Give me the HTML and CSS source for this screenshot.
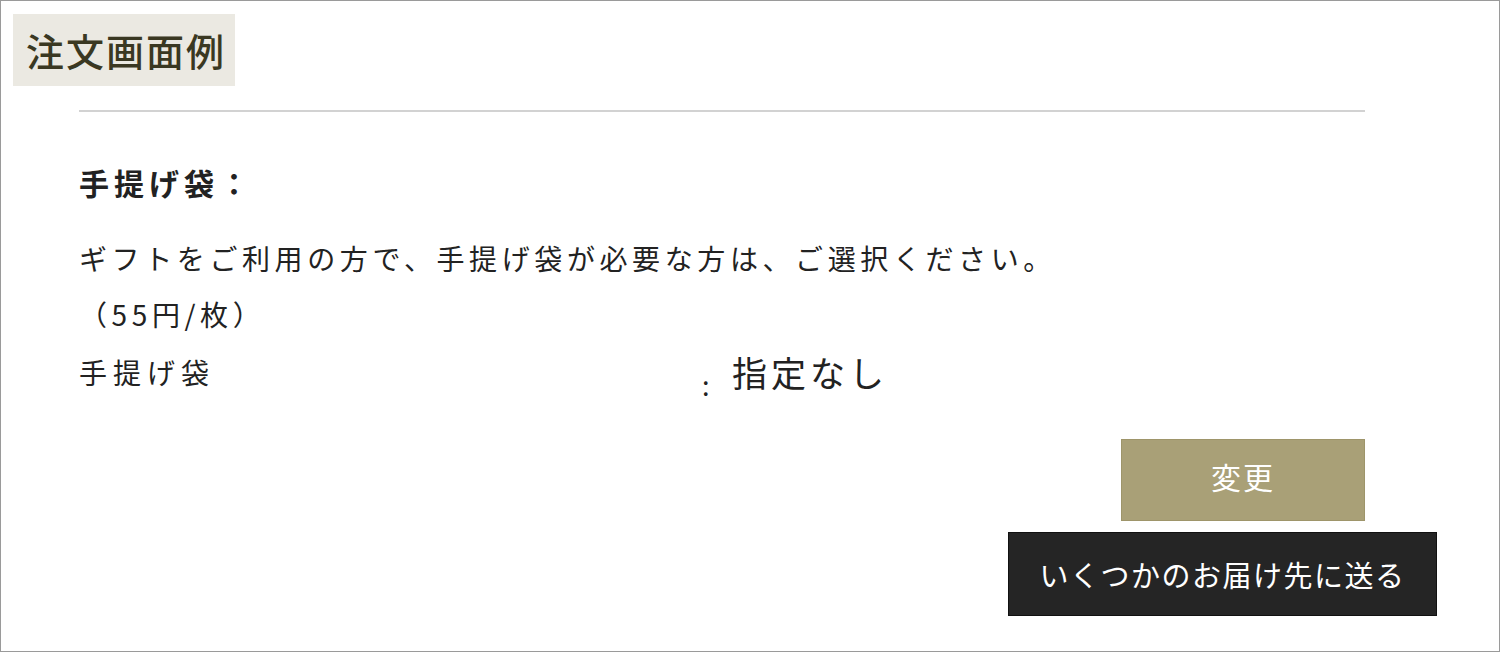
FILE: index.html
```html
<!DOCTYPE html>
<html lang="ja">
<head>
<meta charset="utf-8">
<title>注文画面例</title>
<link rel="stylesheet" href="styles.css">
</head>
<body>
<div class="frame">
  <div class="title">注文画面例</div>
  <div class="content">
    <div class="rule"></div>
    <h2 class="heading">手提げ袋：</h2>
    <p class="desc">ギフトをご利用の方で、手提げ袋が必要な方は、ご選択ください。<br>（55円/枚）</p>
    <div class="row">
      <span class="label">手提げ袋</span>
      <span class="colon">:</span>
      <span class="value">指定なし</span>
    </div>
    <div class="actions">
      <button class="btn btn-change">変更</button>
      <button class="btn btn-multi">いくつかのお届け先に送る</button>
    </div>
  </div>
</div>
</body>
</html>
```

FILE: styles.css
```css
html, body {
  margin: 0;
  padding: 0;
  background: #ffffff;
}
body {
  font-family: "Noto Sans CJK JP", "Noto Sans", sans-serif;
  color: #222222;
}
.frame {
  width: 1500px;
  height: 652px;
  box-sizing: border-box;
  border: 1px solid #9a9a9a;
  padding: 13px 0 0 12px;
  overflow: hidden;
}
.title {
  width: 222px;
  height: 72px;
  box-sizing: border-box;
  padding-left: 13px;
  background: #ebe9e2;
  color: #3a3822;
  font-size: 38px;
  font-weight: 500;
  line-height: 72px;
  letter-spacing: 2px;
  white-space: nowrap;
}
.content {
  margin-left: 66px;
  width: 1286px;
}
.rule {
  margin-top: 24px;
  height: 2px;
  background: #d2d2d2;
}
.heading {
  margin: 50px 0 0 0;
  font-size: 30px;
  font-weight: 700;
  line-height: 40px;
  letter-spacing: 5px;
}
.desc {
  margin: 28px 0 0 0;
  font-size: 28px;
  line-height: 56px;
  letter-spacing: 4.6px;
}
.row {
  margin-top: 2px;
  display: flex;
  align-items: flex-start;
  height: 56px;
}
.label {
  width: 623px;
  font-size: 28px;
  line-height: 56px;
  letter-spacing: 6px;
}
.colon {
  font-size: 27px;
  line-height: 56px;
  padding-top: 13px;
  width: 30px;
}
.value {
  font-size: 35px;
  line-height: 56px;
  letter-spacing: 4px;
}
.actions {
  margin-top: 39px;
  display: flex;
  flex-direction: column;
  align-items: flex-end;
  gap: 11px;
}
.btn {
  font-family: "Noto Sans CJK JP", "Noto Sans", sans-serif;
  color: #ffffff;
  cursor: pointer;
  padding: 0;
  box-sizing: border-box;
}
.btn-change {
  width: 244px;
  height: 82px;
  background: #a9a077;
  border: 1px solid #9e956a;
  font-size: 30px;
  letter-spacing: 2px;
  padding-bottom: 9px;
}
.btn-multi {
  width: 429px;
  height: 84px;
  margin-right: -72px;
  background: #252525;
  border: 1px solid #111111;
  font-size: 29px;
  letter-spacing: 1.5px;
}
```
